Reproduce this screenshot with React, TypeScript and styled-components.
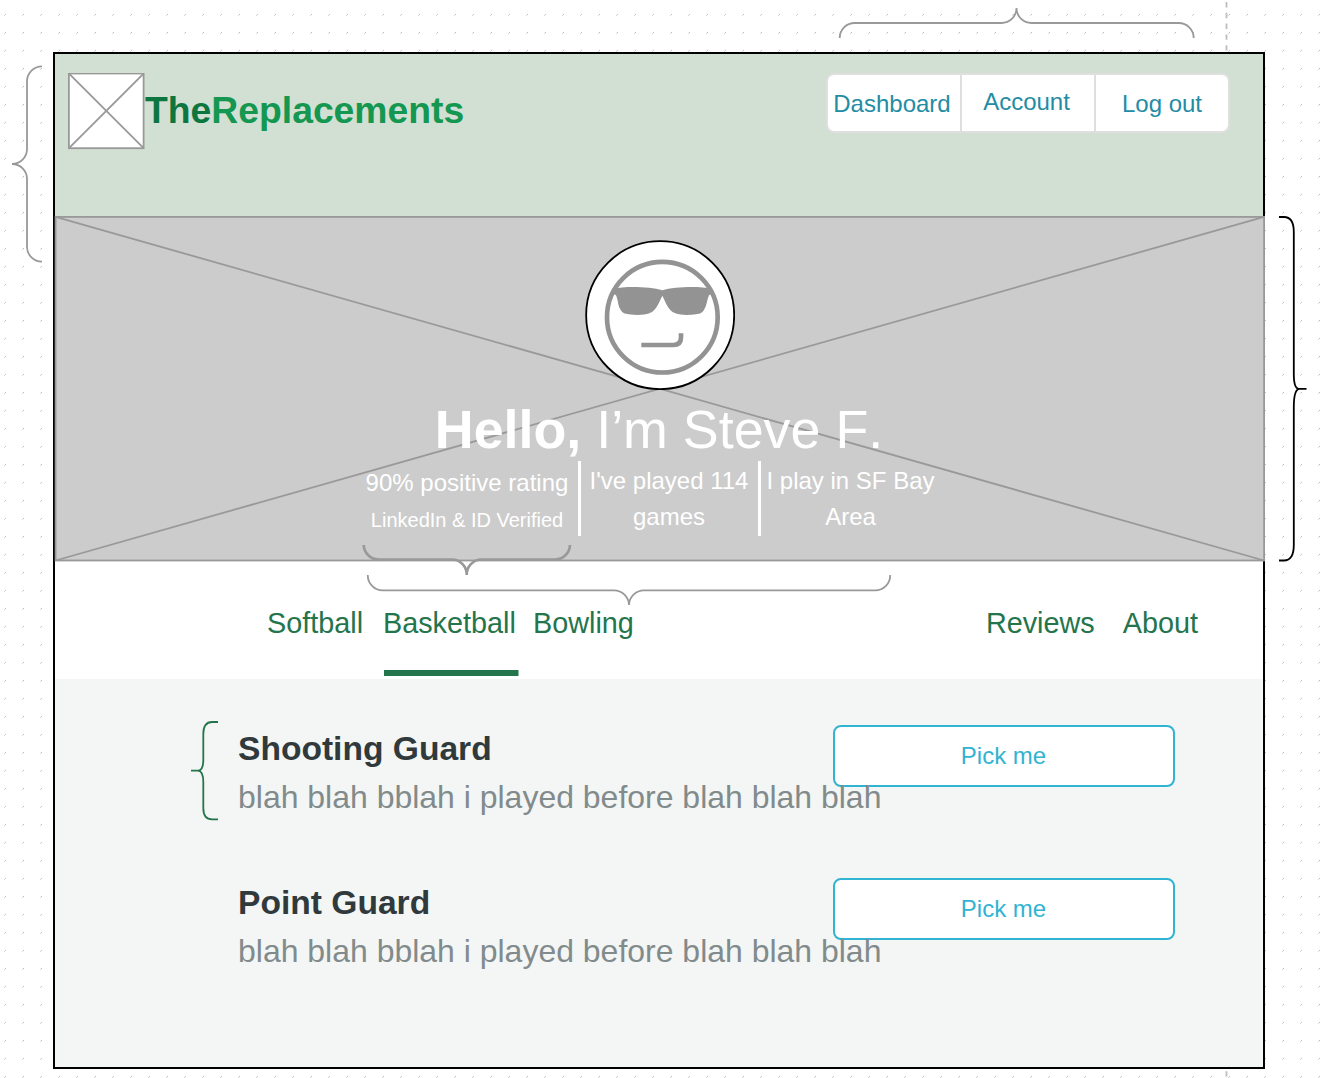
import React from "react";
import styled, { createGlobalStyle } from "styled-components";

const Global = createGlobalStyle`
  * { box-sizing: border-box; }
  html, body { margin: 0; padding: 0; background: #fff; }
  body { font-family: "Liberation Sans", Arial, Helvetica, sans-serif; }
`;

const Canvas = styled.div`
  position: relative;
  width: 1322px;
  height: 1078px;
  overflow: hidden;
  padding: 52px 0 0 53px;
  background-color: #fff;
  background-image:
    conic-gradient(at 1px 1px, transparent 75%, #bcbcbc 0),
    conic-gradient(at 1px 1px, transparent 75%, #d8d8d8 0);
  background-size: 18px 18px, 18px 18px;
  background-position: 5px 14px, 4px 15px;
`;

const Guide = styled.svg`
  position: absolute;
  left: 1225px;
  top: 0;
`;

const Frame = styled.main`
  position: relative;
  width: 1212px;
  height: 1017px;
  border: 2px solid #000;
  background: #fff;
  display: flex;
  flex-direction: column;
`;

const Header = styled.header`
  height: 162px;
  flex: none;
  background: #d2dfd3;
  display: flex;
  justify-content: space-between;
  align-items: flex-start;
  padding: 19px 33px 0 13px;
`;

const Brand = styled.div`
  display: flex;
  align-items: flex-start;
  font-size: 37.3px;
  line-height: 75px;
  font-weight: 700;
  color: #149750;
`;

const BrandStrong = styled.span`
  color: #0c7640;
`;

const LogoBox = styled.svg`
  display: block;
  flex: none;
`;

const ButtonGroup = styled.nav`
  display: flex;
  width: 404px;
  height: 60px;
  border: 2px solid #dedfde;
  border-radius: 8px;
  background: #fff;
`;

const GroupItem = styled.a<{ $lift?: number; $nudge?: number }>`
  flex: none;
  width: 132px;
  display: flex;
  justify-content: center;
  font-size: 24px;
  line-height: 58px;
  padding-right: ${(p) => p.$nudge ?? 0}px;
  margin-top: ${(p) => -(p.$lift ?? 0)}px;
  color: #238ca4;
  white-space: nowrap;
`;

const GroupDivider = styled.span`
  width: 2px;
  flex: none;
  background: #dedfde;
`;

const Hero = styled.section`
  position: relative;
  flex: none;
  width: 1210px;
  height: 345px;
  background: #ccc;
  color: #fff;
  display: flex;
  flex-direction: column;
  align-items: center;
  padding-top: 24px;
`;

const HeroCross = styled.svg`
  position: absolute;
  inset: 0;
  overflow: visible;
`;

const Avatar = styled.svg`
  position: relative;
  display: block;
  flex: none;
`;

const Greeting = styled.h1`
  position: relative;
  margin: 9px 2px 0 0;
  font-size: 53.8px;
  line-height: 60px;
  font-weight: 400;
  font-kerning: none;
  white-space: nowrap;
`;

const Stats = styled.div`
  position: relative;
  display: flex;
  width: 584px;
  height: 75px;
  margin: 2px 23px 0 0;
`;

const Stat = styled.div<{ $w: number; $top: number }>`
  width: ${(p) => p.$w}px;
  flex: none;
  padding-top: ${(p) => p.$top}px;
  text-align: center;
  font-size: 24px;
  line-height: 36px;
  white-space: nowrap;
`;

const StatNote = styled.div`
  padding-top: 1px;
  font-size: 20px;
`;

const StatDivider = styled.span`
  width: 3px;
  flex: none;
  background: #fff;
`;

const Tabs = styled.nav`
  flex: none;
  height: 118px;
  display: flex;
  padding: 36px 65px 0 212px;
`;

const Tab = styled.a<{ $gap?: string; $w?: number; $active?: boolean }>`
  margin-left: ${(p) => p.$gap ?? "0"};
  width: ${(p) => (p.$w ? `${p.$w}px` : "auto")};
  height: 79px;
  font-size: 28.8px;
  line-height: 52px;
  color: #24744c;
  white-space: nowrap;
  background: ${(p) =>
    p.$active ? "linear-gradient(#24744c, #24744c) 1px 73px / 134.5px 6px no-repeat" : "none"};
`;

const Roles = styled.section`
  flex: 1;
  background: #f4f6f5;
  display: flex;
  flex-direction: column;
  gap: 55px;
  padding: 46px 88px 0 183px;
`;

const Role = styled.article`
  display: flex;
  justify-content: space-between;
  height: 99px;
`;

const RoleText = styled.div`
  position: relative;
  z-index: 1;
  width: 560px;
  white-space: nowrap;
`;

const RoleTitle = styled.h2`
  margin: 0;
  font-size: 33.6px;
  line-height: 48px;
  font-weight: 700;
  color: #303a3c;
`;

const RoleNote = styled.p`
  margin: 0;
  padding-top: 1px;
  font-size: 31.97px;
  line-height: 46px;
  color: #828b8c;
`;

const PickButton = styled.button<{ $shift?: number }>`
  flex: none;
  width: 342px;
  height: 62px;
  margin-top: ${(p) => p.$shift ?? 0}px;
  padding: 0 1px 0 0;
  border: 2px solid #31b3d2;
  border-radius: 8px;
  background: #fff;
  color: #31b3d2;
  font: 24px "Liberation Sans", Arial, sans-serif;
`;

const BraceSvg = styled.svg<{ $x: number; $y: number }>`
  position: absolute;
  left: ${(p) => p.$x}px;
  top: ${(p) => p.$y}px;
  overflow: visible;
  pointer-events: none;
`;

interface BraceProps {
  x: number;
  y: number;
  w: number;
  h: number;
  d: string;
  color?: string;
  weight?: number;
}

function Brace({ x, y, w, h, d, color = "#999", weight = 1.8 }: BraceProps) {
  return (
    <BraceSvg $x={x} $y={y} width={w} height={h} fill="none" stroke={color} strokeWidth={weight}>
      <path d={d} />
    </BraceSvg>
  );
}

const braces: BraceProps[] = [
  { x: 12, y: 66, w: 30, h: 196, d: "M30 0.3A15 15 0 0 0 15 15V83A15 15 0 0 1 0 98A15 15 0 0 1 15 113V181A15 15 0 0 0 30 195.7" },
  { x: 839, y: 8, w: 355, h: 30, d: "M0.7 30A15 15 0 0 1 15.7 15H162.5A15 15 0 0 0 177.5 0A15 15 0 0 0 192.5 15H339.5A15 15 0 0 1 354.7 30" },
  { x: 363, y: 545, w: 208, h: 30, weight: 2.7, d: "M0.7 0A15 15 0 0 0 15.7 14.5H89A15 15 0 0 1 103.7 30A15 15 0 0 1 118.5 14.5H192A15 15 0 0 0 207 0" },
  { x: 367, y: 575, w: 524, h: 30, d: "M0.8 0A15 15 0 0 0 15.8 15.4H247A15 15 0 0 1 262 30A15 15 0 0 1 277 15.4H508.2A15 15 0 0 0 523.2 0" },
  { x: 1279, y: 217, w: 27, h: 344, color: "#000", d: "M0 0H5Q14.8 0 14.8 15V157Q14.8 171.8 20 171.8H27.5H20Q14.8 173 14.8 190V328Q14.8 343.5 5 343.5H0" },
  { x: 191, y: 722, w: 27, h: 98, color: "#24744c", d: "M27 0H21Q12.3 0 12.3 12V38Q12.3 48.6 7 48.6H0H7Q12.3 49 12.3 60V86Q12.3 97.3 21 97.3H27" },
];

const roles = [
  { title: "Shooting Guard", note: "blah blah bblah i played before blah blah blah", shift: 0 },
  { title: "Point Guard", note: "blah blah bblah i played before blah blah blah", shift: -1 },
];

export default function App() {
  return (
    <>
      <Global />
      <Canvas>
        <Guide width="4" height="1078">
          <path d="M1.5 2V1078" stroke="#bdbdbd" strokeWidth="1.8" strokeDasharray="5.4 5.4" />
        </Guide>
        <Frame>
          <Header>
            <Brand>
              <LogoBox width="77" height="77" viewBox="0 0 77 77">
                <rect x="0.9" y="0.5" width="74.7" height="74.7" fill="#fff" stroke="#999" strokeWidth="1.8" />
                <path d="M1 0.6L75.6 75.2M75.6 0.6L1 75.2" stroke="#999" strokeWidth="1.8" />
              </LogoBox>
              <BrandStrong>The</BrandStrong>Replacements
            </Brand>
            <ButtonGroup>
              <GroupItem $nudge={4}>Dashboard</GroupItem>
              <GroupDivider />
              <GroupItem $lift={2} $nudge={3}>Account</GroupItem>
              <GroupDivider />
              <GroupItem>Log out</GroupItem>
            </ButtonGroup>
          </Header>
          <Hero>
            <HeroCross width="1210" height="345" fill="none" stroke="#999" strokeWidth="1.8">
              <rect x="0.6" y="0.9" width="1208.5" height="343.6" />
              <path d="M0.6 0.9L1209 344.5M1209 0.9L0.6 344.5" />
            </HeroCross>
            <Avatar width="150" height="150" viewBox="75 30 450 450">
              <circle cx="300.5" cy="255.5" r="222" fill="#fff" stroke="#000" strokeWidth="5.4" />
              <circle cx="307" cy="261.5" r="166" fill="none" stroke="#939393" strokeWidth="14" />
              <path
                fill="#939393"
                d="M158 176C200 168 270 170 307 181C344 170 414 168 457 176L457 190L447 196C440 213 440 228 433 238C428 249 420 252 408 253C385 256 362 256 346 250C322 240 316 213 307 197C298 213 292 240 268 250C252 256 229 256 206 253C194 252 186 249 181 238C174 228 175 213 168 196L158 190Z"
              />
              <path d="M244 345H340Q363 345 363 322V310" fill="none" stroke="#939393" strokeWidth="14" />
            </Avatar>
            <Greeting>
              <b>Hello,</b> I’m Steve F.
            </Greeting>
            <Stats>
              <Stat $w={221} $top={4}>
                90% positive rating
                <StatNote>LinkedIn &amp; ID Verified</StatNote>
              </Stat>
              <StatDivider />
              <Stat $w={177} $top={2}>
                I've played 114
                <br />
                games
              </Stat>
              <StatDivider />
              <Stat $w={180} $top={2}>
                I play in SF Bay
                <br />
                Area
              </Stat>
            </Stats>
          </Hero>
          <Tabs>
            <Tab $w={116}>Softball</Tab>
            <Tab $w={150} $active>Basketball</Tab>
            <Tab>Bowling</Tab>
            <Tab $gap="auto">Reviews</Tab>
            <Tab $gap="28px">About</Tab>
          </Tabs>
          <Roles>
            {roles.map((r) => (
              <Role key={r.title}>
                <RoleText>
                  <RoleTitle>{r.title}</RoleTitle>
                  <RoleNote>{r.note}</RoleNote>
                </RoleText>
                <PickButton $shift={r.shift}>Pick me</PickButton>
              </Role>
            ))}
          </Roles>
        </Frame>
        {braces.map((b) => (
          <Brace key={`${b.x}-${b.y}`} {...b} />
        ))}
      </Canvas>
    </>
  );
}
